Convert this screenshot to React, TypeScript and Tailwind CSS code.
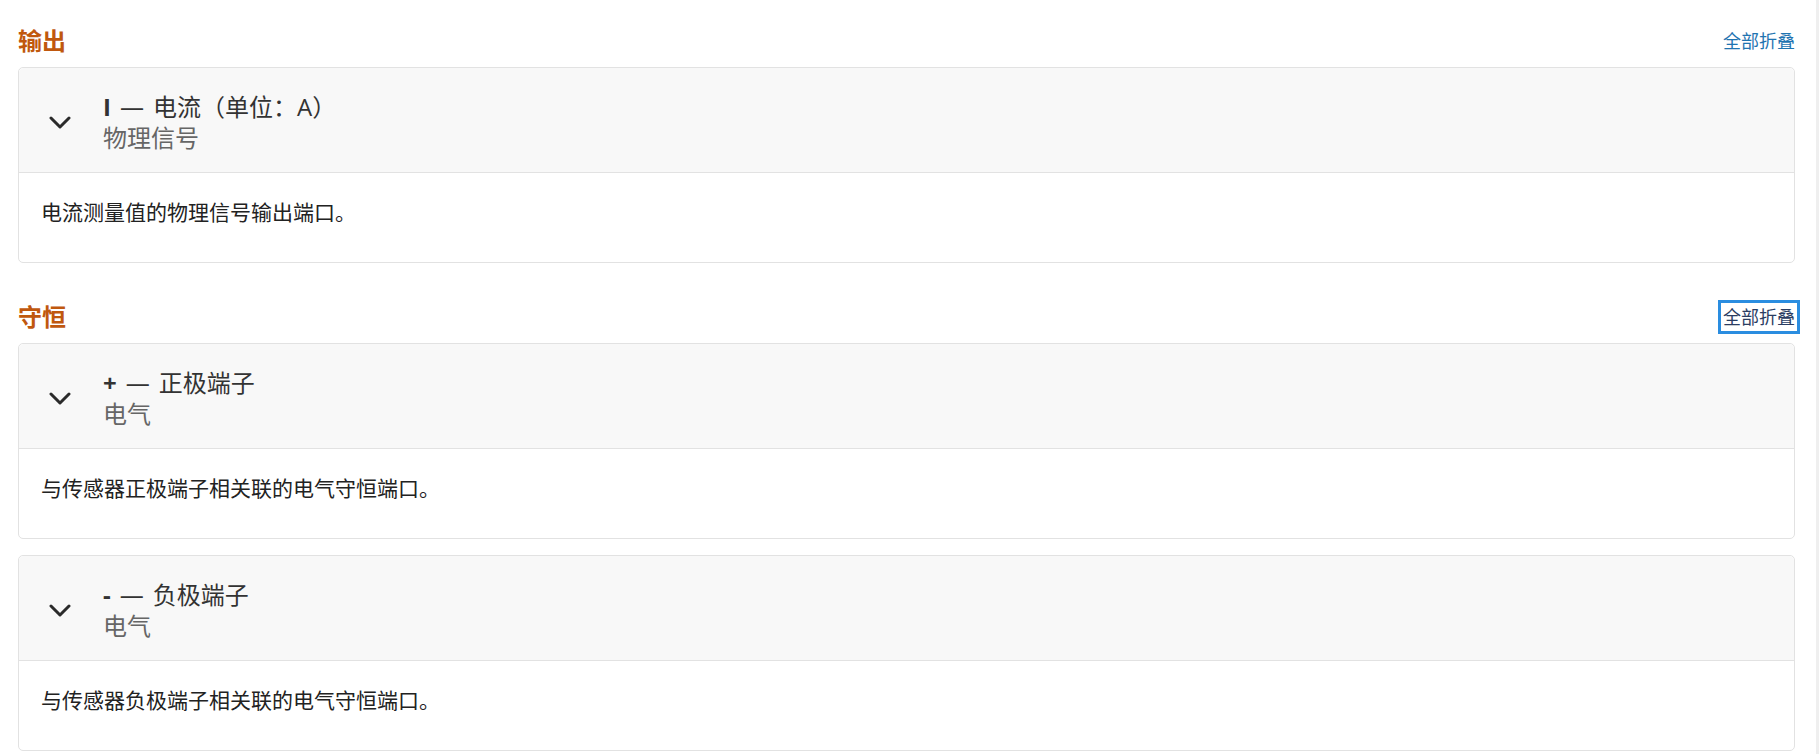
import React from 'react';

type Port = {
  name: string;
  label: string;
  domain: string;
  desc: string;
};

type Section = {
  title: string;
  focused?: boolean;
  ports: Port[];
};

const SECTIONS: Section[] = [
  {
    title: '输出',
    ports: [
      { name: 'I', label: '电流（单位：A）', domain: '物理信号', desc: '电流测量值的物理信号输出端口。' },
    ],
  },
  {
    title: '守恒',
    focused: true,
    ports: [
      { name: '+', label: '正极端子', domain: '电气', desc: '与传感器正极端子相关联的电气守恒端口。' },
      { name: '-', label: '负极端子', domain: '电气', desc: '与传感器负极端子相关联的电气守恒端口。' },
    ],
  },
];

function Chevron() {
  return (
    <svg width="22" height="13" viewBox="0 0 22 13" fill="none" className="shrink-0">
      <polyline points="2,2 11,11 20,2" stroke="#2b2b2b" strokeWidth="3" strokeLinecap="round" strokeLinejoin="round" />
    </svg>
  );
}

function PortCard({ port }: { port: Port }) {
  return (
    <div className="rounded-[5px] border border-[#e2e2e2] bg-white">
      {/* header */}
      <div className="flex items-center rounded-t-[5px] border-b border-[#e2e2e2] bg-[#f8f8f8] pl-[30px] pt-[23px] pb-[19px]">
        <Chevron />
        <div className="ml-[32px] text-[24px] leading-[31px]">
          <div className="text-[#333]">
            <span className="font-bold">{port.name}</span>
            <span className="mx-[9px]">—</span>
            {port.label}
          </div>
          <div className="text-[#666]">{port.domain}</div>
        </div>
      </div>
      {/* body */}
      <div className="px-[22px] pt-[24px] pb-[35px] text-[21px] leading-[30px] text-[#222]">{port.desc}</div>
    </div>
  );
}

export default function App() {
  return (
    <div
      className="flex min-h-[754px] w-full bg-white"
      style={{ fontFamily: '"Open Sans", "Noto Sans CJK SC", sans-serif' }}
    >
      <div className="flex-1 pl-[18px] pr-[21px] pt-[24px]">
        {SECTIONS.map((s, i) => (
          <section key={s.title} className={i > 0 ? 'mt-[37px]' : ''}>
            <div className="mb-[9px] flex h-[34px] items-center justify-between">
              <h2 className="text-[24px] font-bold leading-[34px] text-[#c0580e]">{s.title}</h2>
              <button
                className={
                  s.focused
                    ? 'text-[18px] leading-[24px] text-[#2b3d62] outline-[3px] outline-solid outline-[#2a8de0] outline-offset-[2px]'
                    : 'text-[18px] leading-[24px] text-[#1f74b1]'
                }
              >
                全部折叠
              </button>
            </div>
            <div className="flex flex-col gap-[16px]">
              {s.ports.map(p => (
                <PortCard key={p.name} port={p} />
              ))}
            </div>
          </section>
        ))}
      </div>
      <div className="w-[3px] bg-[#efefef]" />
    </div>
  );
}
